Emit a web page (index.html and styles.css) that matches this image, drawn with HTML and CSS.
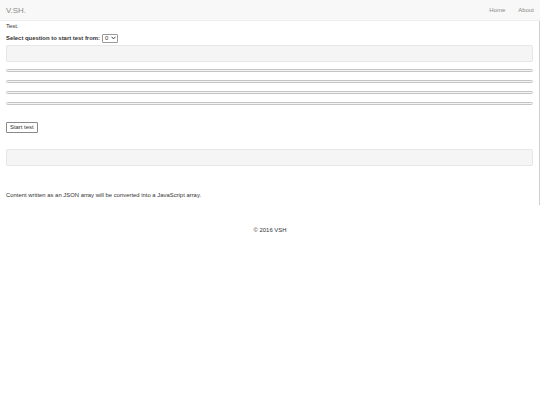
FILE: index.html
```
<!DOCTYPE html>
<html>
<head>
<meta charset="utf-8">
<link rel="stylesheet" href="styles.css">
</head>
<body>
<nav class="navbar">
  <span class="brand">V.SH.</span>
  <div class="nav-links"><a class="nav-link">Home</a><a class="nav-link">About</a></div>
</nav>
<main class="main">
  <p class="title">Test.</p>
  <div class="select-row"><label class="label">Select question to start test from:</label> <span class="select">0 <svg class="caret" width="5" height="4" viewBox="0 0 5 4"><path d="M0.5 0.8 L2.5 2.8 L4.5 0.8" fill="none" stroke="#333" stroke-width="1"/></svg></span></div>
  <div class="well"></div>
  <div class="bars">
    <div class="bar"></div>
    <div class="bar"></div>
    <div class="bar"></div>
    <div class="bar"></div>
  </div>
  <button class="btn">Start test</button>
  <div class="well well-2"></div>
  <p class="note">Content written as an JSON array will be converted into a JavaScript array.</p>
</main>
<footer class="footer">© 2016 VSH</footer>
</body>
</html>
```
FILE: styles.css
```
html, body { margin: 0; padding: 0; background: #fff; }
body { font-family: "Liberation Sans", Arial, sans-serif; font-size: 5.9px; color: #333; }
.navbar { height: 20px; background: #f8f8f8; border-bottom: 1px solid #eeeeee; display: flex; align-items: center; justify-content: space-between; padding: 0 6px; }
.brand { font-size: 7.9px; color: #8a8a8a; }
.nav-links { display: flex; gap: 13px; }
.nav-link { font-size: 6px; color: #888; }
.main { border-right: 1px solid #cfcfcf; padding: 1px 6px 8px 6px; height: 175px; }
.title { margin: 0; height: 8px; line-height: 8px; }
.select-row { margin-top: 3px; display: flex; align-items: center; gap: 2px; font-weight: bold; height: 10px; }
.select { font-weight: normal; display: inline-flex; align-items: center; gap: 3px; border: 1px solid #999; border-radius: 1px; height: 7px; padding: 0 1px 0 2px; }
.well { margin-top: 2px; height: 15px; background: #f5f5f5; border: 1px solid #e6e6e6; border-radius: 2px; }
.bars { display: flex; flex-direction: column; gap: 8px; margin-top: 7px; }
.bar { height: 1px; border: 1px solid #c4c4c4; border-radius: 2px; background: #f5f5f5; }
.btn { display: block; margin-top: 17px; font-family: inherit; font-size: 5.9px; color: #333; background: #fff; border: 1px solid #888; border-radius: 1px; padding: 2px 3px; height: 11px; line-height: 5px; }
.well-2 { margin-top: 16px; }
.note { margin: 26px 0 0 0; }
.footer { text-align: center; margin-top: 22px; }
```
